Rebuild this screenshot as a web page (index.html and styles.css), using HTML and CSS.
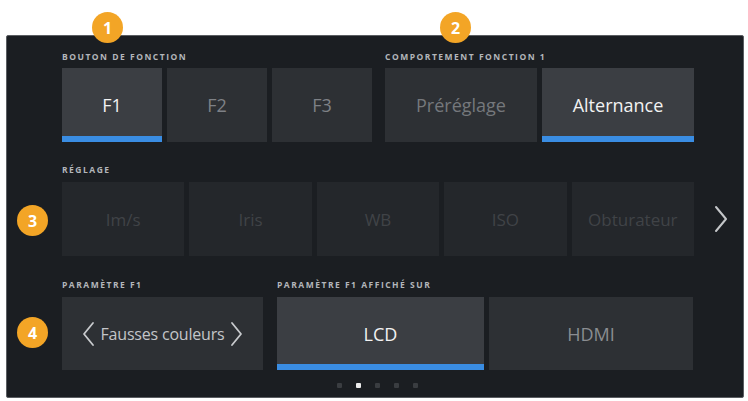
FILE: index.html
```html
<!DOCTYPE html>
<html lang="fr">
<head>
<meta charset="utf-8">
<title>Bouton de fonction</title>
<link rel="stylesheet" href="styles.css">
</head>
<body>
<div class="screen">
  <div class="panel">
    <div class="row row1">
      <div class="group g-func">
        <div class="label">BOUTON DE FONCTION</div>
        <div class="btns">
          <div class="btn active">F1</div>
          <div class="btn">F2</div>
          <div class="btn">F3</div>
        </div>
      </div>
      <div class="group g-comp">
        <div class="label">COMPORTEMENT FONCTION 1</div>
        <div class="btns">
          <div class="btn dim">Préréglage</div>
          <div class="btn active">Alternance</div>
        </div>
      </div>
    </div>

    <div class="row row2">
      <div class="group g-set">
        <div class="label">RÉGLAGE</div>
        <div class="set-line">
          <div class="btns set-btns">
            <div class="btn off">Im/s</div>
            <div class="btn off">Iris</div>
            <div class="btn off">WB</div>
            <div class="btn off">ISO</div>
            <div class="btn off">Obturateur</div>
          </div>
          <svg class="next" width="16" height="28" viewBox="0 0 16 28"><path d="M3 2 L13 14 L3 26" fill="none" stroke="#c4c6c9" stroke-width="2" stroke-linecap="round" stroke-linejoin="round"/></svg>
        </div>
      </div>
    </div>

    <div class="row row3">
      <div class="group g-param">
        <div class="label">PARAMÈTRE F1</div>
        <div class="btns">
          <div class="btn picker">
            <svg width="13" height="26" viewBox="0 0 13 26"><path d="M11 2 L2 13 L11 24" fill="none" stroke="#c8cacd" stroke-width="1.8" stroke-linecap="round" stroke-linejoin="round"/></svg>
            <span>Fausses couleurs</span>
            <svg width="13" height="26" viewBox="0 0 13 26"><path d="M2 2 L11 13 L2 24" fill="none" stroke="#c8cacd" stroke-width="1.8" stroke-linecap="round" stroke-linejoin="round"/></svg>
          </div>
        </div>
      </div>
      <div class="group g-out">
        <div class="label">PARAMÈTRE F1 AFFICHÉ SUR</div>
        <div class="btns">
          <div class="btn active lcd">LCD</div>
          <div class="btn hdmi">HDMI</div>
        </div>
      </div>
    </div>

    <div class="dots">
      <span class="dot"></span>
      <span class="dot on"></span>
      <span class="dot"></span>
      <span class="dot"></span>
      <span class="dot"></span>
    </div>
  </div>

  <div class="badge b1">1</div>
  <div class="badge b2">2</div>
  <div class="badge b3">3</div>
  <div class="badge b4">4</div>
</div>
</body>
</html>
```

FILE: styles.css
```css
html, body {
  margin: 0;
  padding: 0;
  background: #ffffff;
}

body {
  width: 748px;
  height: 401px;
  overflow: hidden;
  font-family: "Open Sans", "Noto Sans", sans-serif;
}

.screen {
  position: relative;
  width: 748px;
  height: 401px;
  padding-top: 35px;
  padding-left: 6px;
  box-sizing: border-box;
}

.panel {
  width: 738px;
  height: 363px;
  box-sizing: border-box;
  background: #1b1e22;
  border: 1px solid #5b5e62;
  border-radius: 2px;
  padding: 15px 50px 0 55px;
  display: flex;
  flex-direction: column;
}

.row {
  display: flex;
}

.row1 {
  gap: 13px;
}

.row2 {
  margin-top: 22px;
}

.row3 {
  margin-top: 23px;
  gap: 14px;
}

.group {
  display: flex;
  flex-direction: column;
}

.label {
  height: 12px;
  line-height: 12px;
  font-size: 8.5px;
  font-weight: 700;
  letter-spacing: 1.5px;
  color: #b3b6ba;
  white-space: nowrap;
}

.btns {
  display: flex;
  gap: 5px;
  margin-top: 5px;
}

.btn {
  height: 74px;
  display: flex;
  align-items: center;
  justify-content: center;
  background: #2d3034;
  color: #7e8186;
  font-size: 18px;
  white-space: nowrap;
}

.btn.active {
  background: #3b3e43;
  color: #f2f2f2;
  box-shadow: inset 0 -6px 0 #3a8de3;
}

.btn.dim {
  color: #75787c;
}

.g-func .btn {
  width: 100px;
}

.g-comp .btn {
  width: 152px;
}

.set-line {
  display: flex;
  align-items: center;
}

.set-btns {
  width: 632px;
  margin-top: 6px;
}

.set-btns .btn {
  flex: 1;
  background: #24272b;
  color: #404347;
  font-size: 17px;
}

.next {
  margin-left: 19px;
  margin-top: 6px;
}

.row3 .btns {
  margin-top: 6px;
}

.row3 .btn {
  height: 73px;
}

.picker {
  width: 201px;
  gap: 6px;
  color: #c3c5c8;
  font-size: 16px;
  letter-spacing: -0.2px;
}

.picker svg {
  display: block;
}

.lcd {
  width: 207px;
}

.hdmi {
  width: 204px;
  color: #8a8d91;
}

.dots {
  display: flex;
  justify-content: center;
  gap: 14px;
  margin-top: 13px;
}

.dot {
  width: 5px;
  height: 5px;
  border-radius: 1px;
  background: #3a3d41;
}

.dot.on {
  background: #ececec;
}

.badge {
  position: absolute;
  width: 31px;
  height: 31px;
  border-radius: 50%;
  background: #f3a526;
  color: #ffffff;
  font-size: 16px;
  font-weight: 700;
  display: flex;
  align-items: center;
  justify-content: center;
  line-height: 1;
}

.b1 { left: 92px; top: 12px; }
.b2 { left: 440px; top: 12px; }
.b3 { left: 17px; top: 205px; }
.b4 { left: 17px; top: 317px; }
```
